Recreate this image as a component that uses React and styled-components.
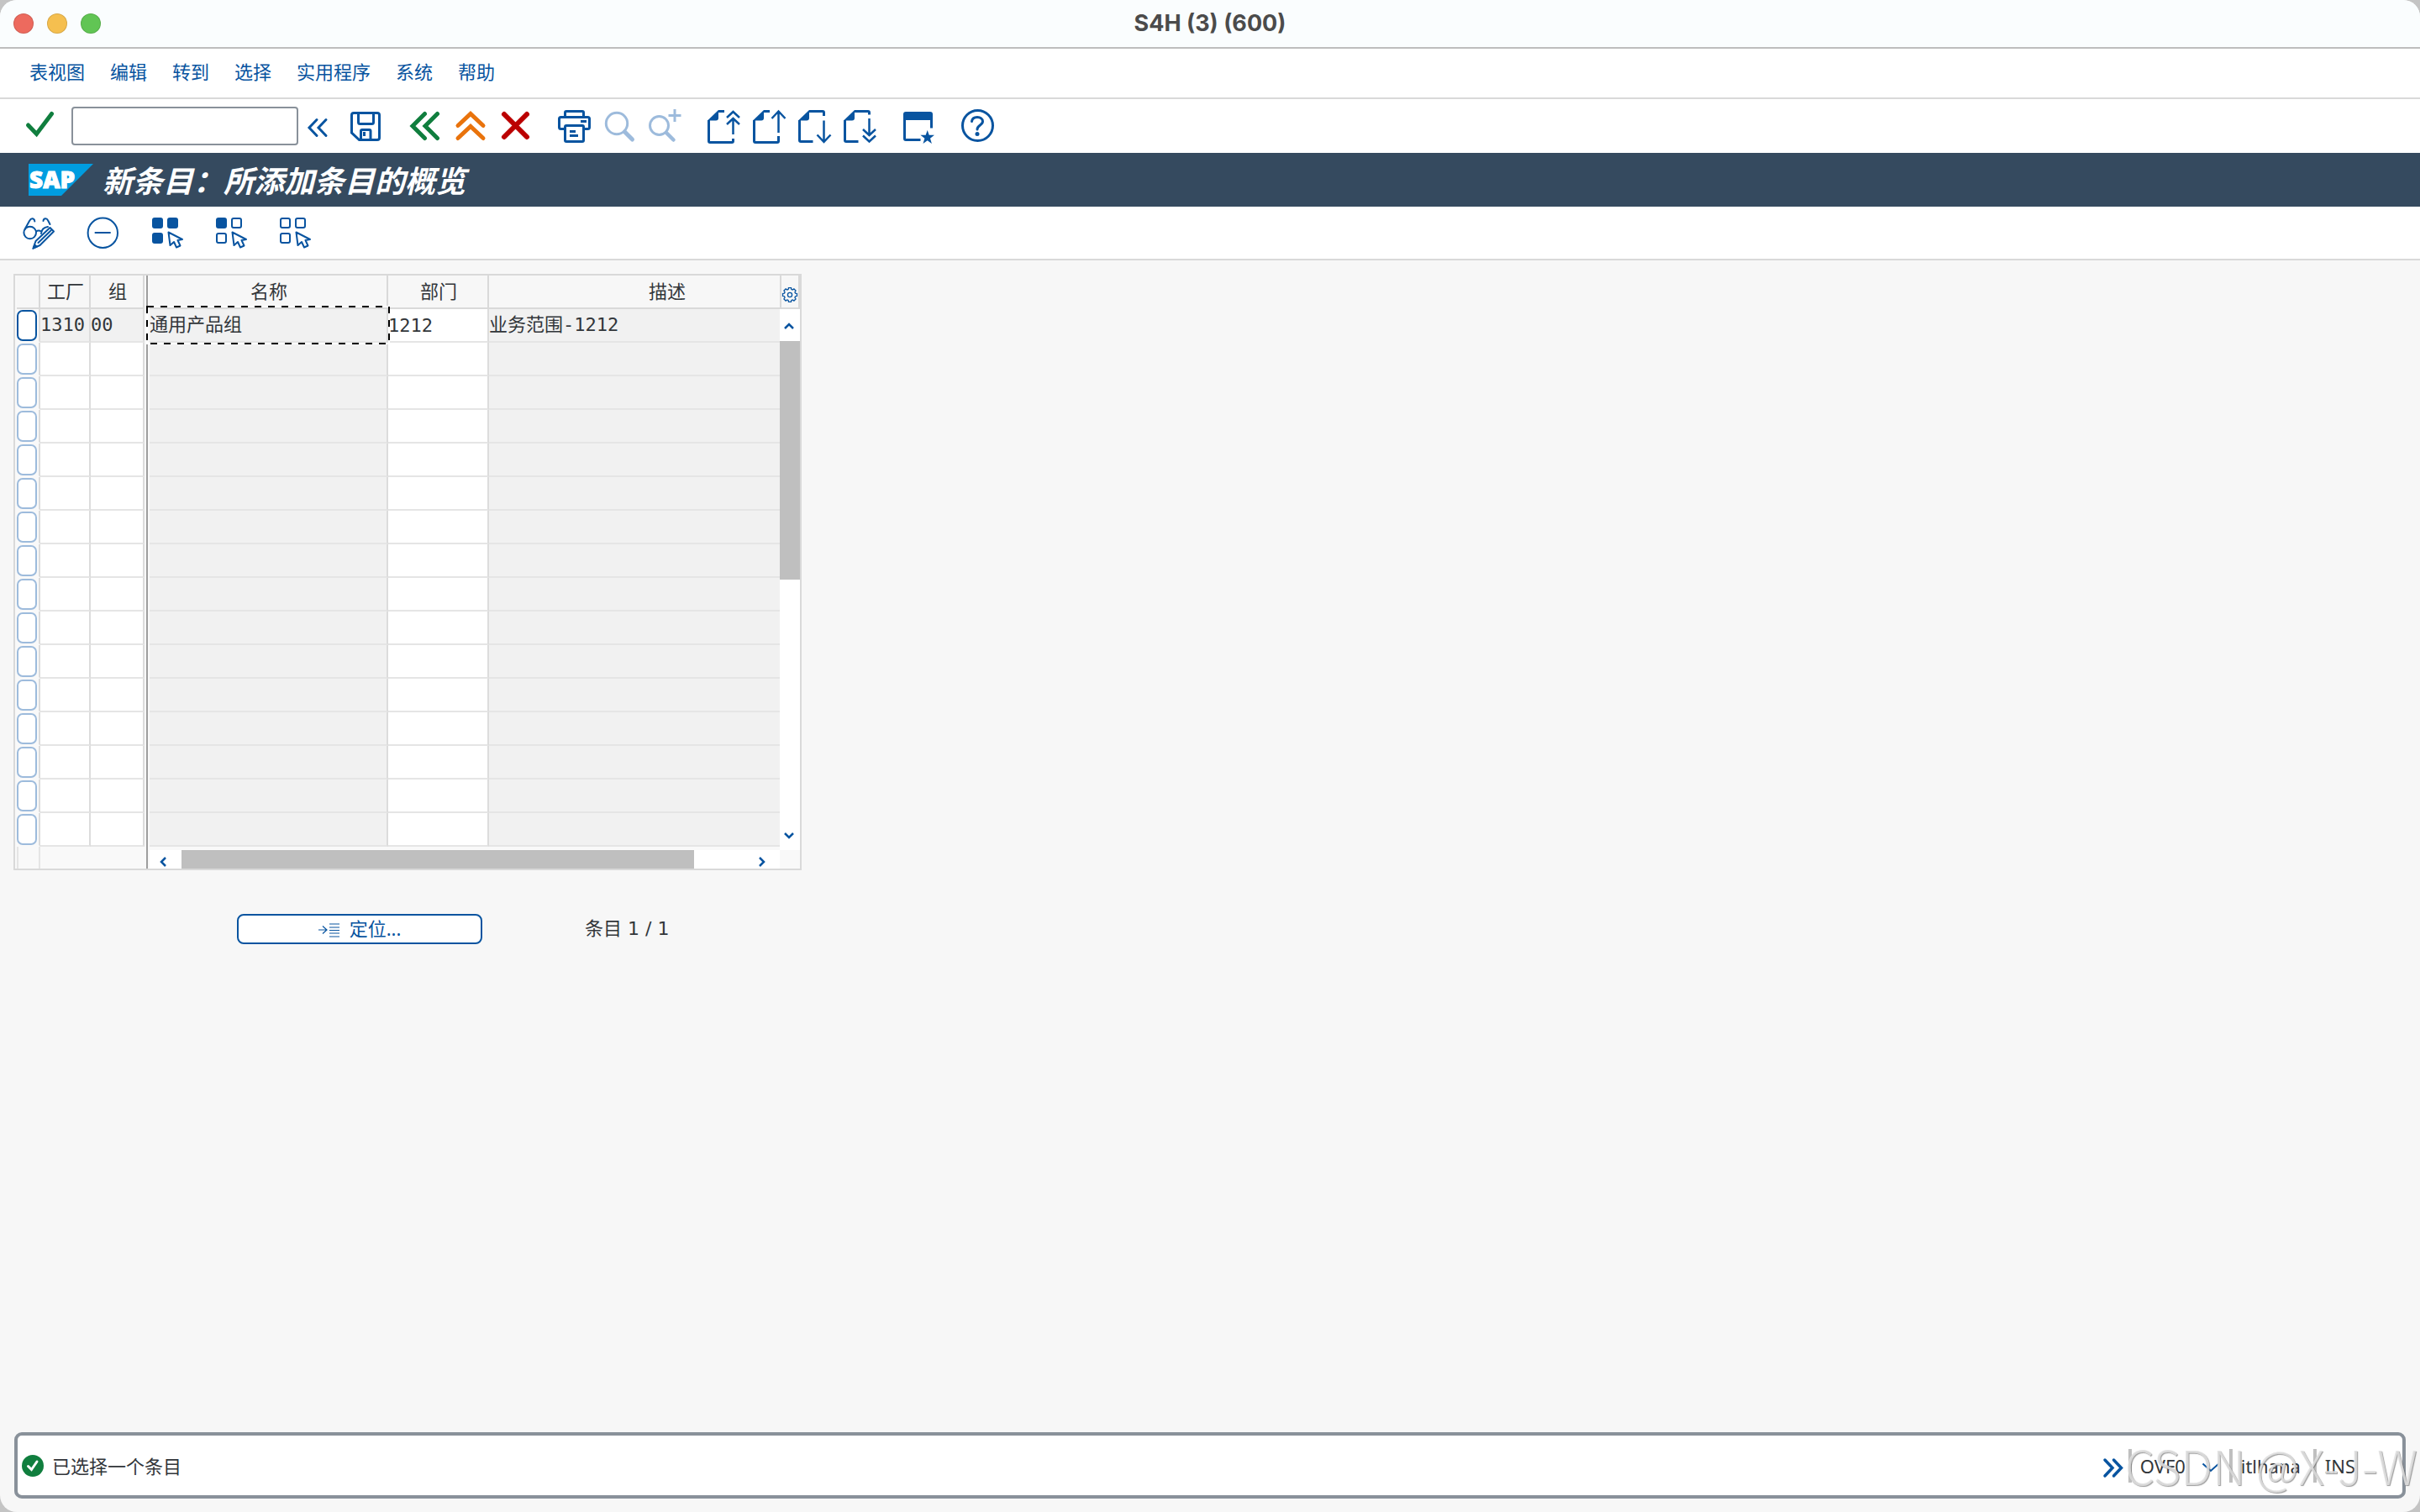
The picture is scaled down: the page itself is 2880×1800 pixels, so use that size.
import React from "react";
import styled, { createGlobalStyle, css } from "styled-components";

const GlobalStyle = createGlobalStyle`
  * {
    box-sizing: border-box;
  }
  body {
    margin: 0;
    background: #c4c4c4;
    color: #32363a;
    font-family: "Noto Sans", "Noto Sans CJK SC", sans-serif;
    font-size: 22px;
    line-height: 30px;
  }
  button, input {
    font: inherit;
    color: inherit;
  }
`;

const BLUE = "#0854a0";
const BLUE_SOFT = "#9dbbdc";
const MONO = `"DejaVu Sans Mono", "Noto Sans CJK SC", monospace`;

const Window = styled.div`
  display: flex;
  flex-direction: column;
  min-height: 100vh;
  border-radius: 20px;
  overflow: hidden;
  background: #f7f7f7;
`;
const TitleBar = styled.header`
  display: grid;
  grid-template-columns: 1fr auto 1fr;
  align-items: center;
  height: 58px;
  padding: 0 16px;
  background: #fafdfe;
  border-bottom: 2px solid #bdbdbd;
`;
const Lights = styled.div`
  display: flex;
  gap: 16px;
`;
const Light = styled.button`
  width: 24px;
  height: 24px;
  padding: 0;
  border: 1px solid rgba(0, 0, 0, 0.12);
  border-radius: 50%;
  background: ${(props) => props.$color};
`;
const WindowTitle = styled.h1`
  margin: 0;
  color: #4b4b4b;
  font-family: Inter, sans-serif;
  font-size: 27px;
  font-weight: 700;
  line-height: 32px;
`;
const MenuBar = styled.nav`
  display: flex;
  align-items: center;
  gap: 30px;
  height: 60px;
  padding: 0 35px 4px;
  background: #fff;
  border-bottom: 2px solid #d9d9d9;
`;
const MenuLink = styled.a`
  color: ${BLUE};
  text-decoration: none;
`;
const Toolbar = styled.div`
  display: flex;
  align-items: center;
  gap: 30px;
  height: 64px;
  padding: 0 31px;
  background: #fff;
`;
const ToolGroup = styled.div`
  display: flex;
  align-items: center;
  gap: 14px;
`;
const CommandField = styled.div`
  display: flex;
  align-items: center;
  gap: 8px;
`;
const CommandInput = styled.input`
  width: 270px;
  height: 46px;
  padding: 0 10px;
  border: 2px solid #89919a;
  border-radius: 4px;
  background: #fff;
`;
const IconButton = styled.button`
  display: flex;
  padding: 0;
  border: 0;
  background: none;
  color: ${(props) => props.$color || BLUE};
`;
const Svg = styled.svg`
  display: block;
  flex: none;
  overflow: visible;
  fill: none;
  stroke: currentColor;
`;
const TitleStrip = styled.div`
  display: flex;
  align-items: center;
  gap: 11px;
  height: 64px;
  padding: 0 34px;
  background: #354a5f;
`;
const LogoText = styled.text`
  fill: #fff;
  stroke: #fff;
  stroke-width: 1;
  font-family: "Open Sans", sans-serif;
  font-size: 28px;
  font-weight: 800;
`;
const ScreenTitle = styled.h2`
  margin: 0;
  padding-bottom: 2px;
  color: #fff;
  font-family: "Noto Sans CJK SC", sans-serif;
  font-size: 36px;
  font-style: italic;
  font-weight: 700;
  line-height: 48px;
`;
const AppToolbar = styled.div`
  display: flex;
  align-items: center;
  gap: 36px;
  height: 64px;
  padding: 0 27px;
  background: #fff;
  border-bottom: 2px solid #d9d9d9;
`;
const Main = styled.main`
  flex: 1;
  padding: 16px;
`;

const TablePanel = styled.section`
  display: grid;
  grid-template-columns: 154px 6px 750px 24px;
  grid-template-rows: auto 26px;
  width: max-content;
  border: 2px solid #d9d9d9;
  background: #f9f9f9;
`;
const Divider = styled.div`
  grid-row: 1 / -1;
  grid-column: 2;
  margin: 0 2px;
  background: #9e9e9e;
`;
const FrozenPane = styled.div`
  padding-left: 2px;
`;
const ScrollPane = styled.div`
  grid-column: 3;
  min-width: 0;
  /* the focus frame sticks out of the pane on the left */
  clip-path: inset(-4px 0 -4px -4px);
`;
const Table = styled.table`
  width: ${(props) => props.$width}px;
  table-layout: fixed;
  border-collapse: separate;
  border-spacing: 0;
  font-family: ${MONO};
  line-height: 26px;
`;
const Th = styled.th`
  width: ${(props) => props.$width}px;
  height: 40px;
  padding: 2px 0 0 2px;
  border-right: 2px solid #d9d9d9;
  border-bottom: 2px solid #d9d9d9;
  background: #f7f7f7;
  font-weight: 400;
  text-align: center;
`;
const Td = styled.td`
  height: 40px;
  padding: 0;
  border-right: 2px solid #dcdcdc;
  border-bottom: 2px solid #e5e5e5;
  background: ${(props) => (props.$readOnly ? "#f1f1f1" : "#fff")};
  white-space: nowrap;
`;
const NameTd = styled(Td)`
  position: relative;
`;
const SelectorTd = styled(Td)`
  background: #f9f9f9;
  border-bottom-color: #f9f9f9;
`;
const CellInput = styled.input`
  display: block;
  width: 100%;
  height: 36px;
  padding: 0;
  border: 0;
  outline: 0;
  background: transparent;
`;
const RowSelector = styled.button`
  display: block;
  width: 24px;
  height: 37px;
  padding: 0;
  border: 2px solid ${(props) => (props.$active ? BLUE : BLUE_SOFT)};
  border-radius: 7px;
  background: #fff;
`;
const FocusFrame = styled.svg`
  position: absolute;
  z-index: 1;
  top: -4px;
  left: -4px;
  width: 290px;
  height: 46px;
  fill: none;
  stroke-width: 2;
  pointer-events: none;
`;
const FrozenFoot = styled.div`
  width: 28px;
  margin-left: 2px;
  border: solid #e5e5e5;
  border-width: 0 2px;
`;
const scrollButton = css`
  display: flex;
  flex: none;
  align-items: center;
  justify-content: center;
  padding: 0;
  border: 0;
  background: #fff;
  color: ${BLUE};
`;
const VScroll = styled.div`
  grid-column: 4;
  display: flex;
  flex-direction: column;
  margin-bottom: -4px;
  background: #fff;
`;
const SettingsButton = styled.button`
  ${scrollButton}
  height: 40px;
  padding-top: 8px;
  border: solid #d9d9d9;
  border-width: 0 2px 2px;
  background: #f7f7f7;
`;
const VArrow = styled.button`
  ${scrollButton}
  height: 38px;
  padding: 2px 2px 0 0;
`;
const VTrack = styled.div`
  flex: 1;
`;
const VThumb = styled.div`
  height: 284px;
  background: #bfbfbf;
`;
const HScroll = styled.div`
  grid-row: 2;
  grid-column: 3;
  display: flex;
  height: 22px;
  margin-top: 4px;
  background: #fff;
`;
const HArrow = styled.button`
  ${scrollButton}
  width: 38px;
  padding: 6px 6px 0 0;
`;
const HTrack = styled.div`
  flex: 1;
`;
const HThumb = styled.div`
  width: 610px;
  height: 100%;
  background: #bfbfbf;
`;

const Actions = styled.div`
  display: flex;
  align-items: center;
  gap: 122px;
  padding: 52px 0 0 266px;
`;
const PositionButton = styled.button`
  display: flex;
  align-items: center;
  justify-content: center;
  gap: 12px;
  width: 292px;
  height: 36px;
  padding: 0 0 2px;
  border: 2px solid ${BLUE};
  border-radius: 8px;
  background: #fff;
  color: ${BLUE};
  line-height: 30px;
`;
const EntryCount = styled.span`
  font-family: "DejaVu Sans", "Noto Sans CJK SC", sans-serif;
`;

const StatusBar = styled.footer`
  position: relative;
  display: flex;
  align-items: center;
  justify-content: space-between;
  height: 79px;
  margin: 0 17px 16px;
  padding: 0 56px 0 5px;
  border: 4px solid #89919a;
  border-radius: 9px;
  background: #fff;
`;
const StatusMessage = styled.div`
  display: flex;
  align-items: center;
  gap: 10px;
`;
const StatusInfo = styled.div`
  display: flex;
  align-items: center;
`;
const ExpandButton = styled(IconButton)`
  margin-right: 6px;
`;
const InfoField = styled.div`
  display: flex;
  align-items: center;
  gap: 20px;
  min-width: ${(props) => props.$width}px;
  height: 40px;
  padding-left: 10px;
  border-left: 4px solid #bfbfbf;
`;
const Watermark = styled.span`
  position: absolute;
  right: -18px;
  bottom: 6px;
  color: rgba(226, 226, 226, 0.85);
  font-family: "Noto Sans CJK SC", sans-serif;
  font-size: 56px;
  font-weight: 300;
  line-height: 60px;
  text-shadow: 1px 1px 1px rgba(90, 90, 90, 0.6);
  white-space: nowrap;
  pointer-events: none;
`;

const FOLD = <path d="M-1 13.500L12 1v9.500q0 3-3 3z" fill="currentColor" stroke="none" />;
const CURSOR = (
  <path
    d="M21.500 19.500l2 15.500 4.500-4 3 6.500 4.500-2-3-6.500 5.500-1z"
    strokeWidth="2"
    strokeLinejoin="round"
  />
);

const icons = {
  check: <path d="M2.500 19L12.500 29.500L30.500 5.500" strokeWidth="5" strokeLinecap="round" />,
  collapse: <path d="M14 12.500L5 22L14 31.500M25 12.500L16 22L25 31.500" strokeWidth="3" strokeLinecap="round" />,
  save: (
    <g strokeWidth="3">
      <path d="M4 4.500h28q2.500 0 2.500 2.500v27q0 2.500-2.500 2.500H10.500L1.500 28V7q0-2.500 2.500-2.500z" />
      <path d="M9.500 5v10.500q0 2 2 2h14q2 0 2-2V5M12.500 36V26q0-1.500 1.500-1.500h8.500q1.500 0 1.500 1.500v10" />
      <path d="M16.500 27v5" />
    </g>
  ),
  back: <path d="M18.500 5.500L4 20L18.500 34.500M33.500 5.500L19 20L33.500 34.500" strokeWidth="5" strokeLinecap="round" />,
  up: <path d="M4 19.500L19 5.500L34 19.500M4 34.500L19 20.500L34 34.500" strokeWidth="5" strokeLinecap="round" />,
  cancel: <path d="M5 6L32 33M32 6L5 33" strokeWidth="6" strokeLinecap="round" />,
  print: (
    <g strokeWidth="3">
      <path d="M7.500 9V4q0-1.500 1.500-1.500h19q1.500 0 1.500 1.500v5" />
      <path d="M7.500 23.500H2.500q-2 0-2-2v-10q0-2 2-2h32q2 0 2 2v10q0 2-2 2h-5" />
      <rect x="7.500" y="19.500" width="22" height="19" rx="1.500" />
      <path d="M13 26.500h7M13 31.500h10M26 14.500h7" />
    </g>
  ),
  find: (
    <g>
      <circle cx="15" cy="17" r="12.700" strokeWidth="3" />
      <path d="M24.500 27L33.500 36" strokeWidth="5" strokeLinecap="round" />
    </g>
  ),
  findNext: (
    <g>
      <circle cx="11.500" cy="19.500" r="11" strokeWidth="3" />
      <path d="M20 28L28.500 36.500" strokeWidth="4.500" strokeLinecap="round" />
      <path d="M22.500 7.500h15M30 0v15" strokeWidth="3" />
    </g>
  ),
  firstPage: (
    <g strokeWidth="3">
      {FOLD}
      <path d="M19 2.500H12M.5 13v25q0 1.500 1.500 1.500h26q1.500 0 1.500-1.500v-3" />
      <path d="M22 10L29.500 3L37 10M22 18L29.500 11L37 18M29.500 11v19" strokeWidth="2.500" />
    </g>
  ),
  prevPage: (
    <g strokeWidth="3">
      {FOLD}
      <path d="M19 2.500H12M.5 13v25q0 1.500 1.500 1.500h26q1.500 0 1.500-1.500v-6" />
      <path d="M21.500 11L29.500 2.500L37.500 11M29.500 3v25" strokeWidth="2.500" />
    </g>
  ),
  nextPage: (
    <g strokeWidth="3">
      {FOLD}
      <path d="M12 2.500h16q1.500 0 1.500 1.500v4M.5 13v24q0 1.500 1.500 1.500h14.500" />
      <path d="M21.500 30.500L29.500 39L37.500 30.500M29.500 13.500V38" strokeWidth="2.500" />
    </g>
  ),
  lastPage: (
    <g strokeWidth="3">
      {FOLD}
      <path d="M12 2.500h16q1.500 0 1.500 1.500v2.500M.5 13v24q0 1.500 1.500 1.500h14.500" />
      <path d="M22 24L29.500 31L37 24M22 31.500L29.500 38.500L37 31.500M29.500 11v19" strokeWidth="2.500" />
    </g>
  ),
  favorite: (
    <g strokeWidth="3">
      <path d="M33.500 22.500V6q0-1.500-1.500-1.500H3q-1.500 0-1.500 1.500v29q0 1.500 1.500 1.500h17.500" />
      <path d="M1 5h33v8H1z" fill="currentColor" stroke="none" />
      <path
        d="M28.700 25l2 5.800h6.300l-5 3.900 1.900 6.200-5.200-3.700-5.200 3.700 1.900-6.200-5-3.900h6.300z"
        fill="currentColor"
        stroke="none"
      />
    </g>
  ),
  help: (
    <g strokeWidth="3">
      <circle cx="18.500" cy="19.500" r="18" />
      <path d="M11.500 14.500c.5-3.500 3.200-5 6.500-5 3.800 0 6.500 2 6.500 5 0 4.500-6.500 4.500-6.500 9.500" strokeLinecap="round" />
      <circle cx="18" cy="29.500" r="2.500" fill="currentColor" stroke="none" />
    </g>
  ),
  display: (
    <g strokeWidth="2" strokeLinejoin="round" strokeLinecap="round">
      <circle cx="8.700" cy="20" r="7.300" />
      <path d="M2.500 16L8 6q2-3.500 4.500-2.500 1.800 .8 1.800 3" />
      <path d="M16 18.500q3-2 6 0M22 21q.5-7 8-8" />
      <path d="M24.500 6q.3-2.500 2.500-2.700 2-.2 3 2L32.500 10" />
      <path d="M12.500 38.500l3-8.500L32.500 14l4.500 4.500L20.500 35zM18.500 32L33.500 17.500" />
      <path d="M12 39l2-5.500 3.500 3z" fill="currentColor" strokeWidth="1" />
    </g>
  ),
  remove: (
    <g strokeWidth="2">
      <circle cx="19.300" cy="20.300" r="17.700" />
      <path d="M9.700 20h19" />
    </g>
  ),
};

function SelectIcon({ filled }) {
  const squares = [
    [2, 2],
    [20, 2],
    [2, 20],
  ];
  return (
    <g strokeWidth="2">
      {squares.map(([x, y], i) => (
        <rect
          key={i}
          x={x + 1}
          y={y + 1}
          width="11"
          height="11"
          rx="2"
          fill={i < filled ? "currentColor" : "none"}
        />
      ))}
      {CURSOR}
    </g>
  );
}

function gearPath(c, inner, outer) {
  let d = "";
  for (let i = 0; i < 8; i++) {
    [
      [-0.28, inner],
      [-0.18, outer],
      [0.18, outer],
      [0.28, inner],
    ].forEach(([off, r]) => {
      const a = (i * Math.PI) / 4 + off;
      d += `${d ? "L" : "M"}${c + r * Math.cos(a)} ${c + r * Math.sin(a)}`;
    });
  }
  return d + "z";
}

function Tool({ label, icon, color, width = 40, children }) {
  return (
    <IconButton type="button" aria-label={label} $color={color}>
      <Svg width={width} height="40" viewBox={`0 0 ${width} 40`}>
        {children || icons[icon]}
      </Svg>
    </IconButton>
  );
}

const ARROWS = {
  up: "M1 7L6 2L11 7",
  down: "M1 2L6 7L11 2",
  left: "M7 1L2 6L7 11",
  right: "M2 1L7 6L2 11",
};

function Arrow({ dir }) {
  const vertical = dir === "up" || dir === "down";
  const w = vertical ? 12 : 9;
  const h = vertical ? 9 : 12;
  return (
    <Svg width={w} height={h} viewBox={`0 0 ${w} ${h}`} strokeWidth="2.500">
      <path d={ARROWS[dir]} />
    </Svg>
  );
}

const menus = ["表视图", "编辑", "转到", "选择", "实用程序", "系统", "帮助"];

const rows = Array.from({ length: 16 }, () => ({}));
rows[0] = { plant: "1310", group: "00", name: "通用产品组", dept: "1212", desc: "业务范围-1212" };

function EntryTable() {
  return (
    <TablePanel>
      <FrozenPane>
        <Table $width={152}>
          <thead>
            <tr>
              <Th $width={28} />
              <Th $width={60}>工厂</Th>
              <Th $width={64}>组</Th>
            </tr>
          </thead>
          <tbody>
            {rows.map((row, i) => (
              <tr key={i}>
                <SelectorTd>
                  <RowSelector type="button" aria-label={`行 ${i + 1}`} $active={i === 0} />
                </SelectorTd>
                <Td $readOnly={i === 0}>
                  {row.plant || <CellInput aria-label={`工厂 ${i + 1}`} />}
                </Td>
                <Td $readOnly={i === 0}>
                  {row.group || <CellInput aria-label={`组 ${i + 1}`} />}
                </Td>
              </tr>
            ))}
          </tbody>
        </Table>
      </FrozenPane>
      <Divider />
      <ScrollPane>
        <Table $width={828}>
          <thead>
            <tr>
              <Th $width={284}>名称</Th>
              <Th $width={120}>部门</Th>
              <Th $width={424}>描述</Th>
            </tr>
          </thead>
          <tbody>
            {rows.map((row, i) =>  (
              <tr key={i}>
                {row.name ? (
                  <NameTd $readOnly>
                    {row.name}
                    <FocusFrame viewBox="0 0 290 46">
                      <rect x="1" y="1" width="288" height="44" stroke="#fff" />
                      <rect x="1" y="1" width="288" height="44" stroke="#000" strokeDasharray="8 8" />
                    </FocusFrame>
                  </NameTd>
                ) : (
                  <Td $readOnly />
                )}
                <Td>
                  <CellInput aria-label={`部门 ${i + 1}`} defaultValue={row.dept} />
                </Td>
                <Td $readOnly>{row.desc}</Td>
              </tr>
            ))}
          </tbody>
        </Table>
      </ScrollPane>
      <VScroll>
        <SettingsButton type="button" aria-label="表设置">
          <Svg width="18" height="18" viewBox="0 0 18 18" strokeWidth="1.300">
            <path d={gearPath(9, 6.8, 8.6)} />
            <circle cx="9" cy="9" r="2.600" />
          </Svg>
        </SettingsButton>
        <VArrow type="button" aria-label="向上">
          <Arrow dir="up" />
        </VArrow>
        <VTrack>
          <VThumb />
        </VTrack>
        <VArrow type="button" aria-label="向下">
          <Arrow dir="down" />
        </VArrow>
      </VScroll>
      <FrozenFoot />
      <HScroll>
        <HArrow type="button" aria-label="向左">
          <Arrow dir="left" />
        </HArrow>
        <HTrack>
          <HThumb />
        </HTrack>
        <HArrow type="button" aria-label="向右">
          <Arrow dir="right" />
        </HArrow>
      </HScroll>
    </TablePanel>
  );
}

function App() {
  return (
    <Window>
      <GlobalStyle />
      <TitleBar>
        <Lights>
          <Light type="button" aria-label="关闭" $color="#ed6a5e" />
          <Light type="button" aria-label="最小化" $color="#f5bf4f" />
          <Light type="button" aria-label="缩放" $color="#61c554" />
        </Lights>
        <WindowTitle>S4H (3) (600)</WindowTitle>
      </TitleBar>

      <MenuBar>
        {menus.map((menu) => (
          <MenuLink key={menu} href="#">
            {menu}
          </MenuLink>
        ))}
      </MenuBar>

      <Toolbar>
        <ToolGroup>
          <Tool label="回车" icon="check" color="#107e3e" />
          <CommandField>
            <CommandInput type="text" aria-label="命令" />
            <Tool label="收起" icon="collapse" width={24} />
          </CommandField>
        </ToolGroup>
        <Tool label="保存" icon="save" />
        <ToolGroup>
          <Tool label="返回" icon="back" color="#107e3e" />
          <Tool label="退出" icon="up" color="#e9730c" />
          <Tool label="取消" icon="cancel" color="#bb0000" />
        </ToolGroup>
        <ToolGroup>
          <Tool label="打印" icon="print" />
          <Tool label="查找" icon="find" color={BLUE_SOFT} />
          <Tool label="查找下一个" icon="findNext" color={BLUE_SOFT} />
        </ToolGroup>
        <ToolGroup>
          <Tool label="第一页" icon="firstPage" />
          <Tool label="上一页" icon="prevPage" />
          <Tool label="下一页" icon="nextPage" />
          <Tool label="最后一页" icon="lastPage" />
        </ToolGroup>
        <Tool label="收藏" icon="favorite" />
        <Tool label="帮助" icon="help" />
      </Toolbar>

      <TitleStrip>
        <Svg width="77" height="38" viewBox="0 0 77 38">
          <path d="M0 0H77L39 38H0z" fill="#009de0" stroke="none" />
          <LogoText x="1" y="29">
            SAP
          </LogoText>
        </Svg>
        <ScreenTitle>新条目：所添加条目的概览</ScreenTitle>
      </TitleStrip>

      <AppToolbar>
        <Tool label="显示/更改" icon="display" />
        <Tool label="删除" icon="remove" />
        <Tool label="全选">
          <SelectIcon filled={3} />
        </Tool>
        <Tool label="选择块">
          <SelectIcon filled={1} />
        </Tool>
        <Tool label="取消全选">
          <SelectIcon filled={0} />
        </Tool>
      </AppToolbar>

      <Main>
        <EntryTable />
        <Actions>
          <PositionButton type="button">
            <Svg width="25" height="20" viewBox="0 0 25 20" strokeWidth="1.200">
              <path d="M0 12h10M5 7.500L10 12L5 16.500" />
              <path d="M13 5h12M13 9h12M13 12.500h12M13 16h12M13 20h12" />
            </Svg>
            定位...
          </PositionButton>
          <EntryCount>条目 1 / 1</EntryCount>
        </Actions>
      </Main>

      <StatusBar>
        <StatusMessage>
          <Svg width="26" height="26" viewBox="0 0 26 26">
            <circle cx="13" cy="13" r="13" fill="#107e3e" stroke="none" />
            <path d="M7.500 13.500L11.500 17.500L18 8" stroke="#fff" strokeWidth="3" strokeLinecap="round" />
          </Svg>
          已选择一个条目
        </StatusMessage>
        <StatusInfo>
          <ExpandButton type="button" aria-label="展开">
            <Svg width="24" height="24" viewBox="0 0 24 24" strokeWidth="3.500" strokeLinecap="round">
              <path d="M2 5L11 14.500L2 24M12.500 5L21.500 14.500L12.500 24" />
            </Svg>
          </ExpandButton>
          <InfoField $width={120}>
            OVF0
            <IconButton type="button" aria-label="系统信息">
              <Svg width="20" height="10" viewBox="0 0 20 10" strokeWidth="2">
                <path d="M.5 2.500L10 11L19.500 2.500" />
              </Svg>
            </IconButton>
          </InfoField>
          <InfoField $width={100}>itlhana</InfoField>
          <InfoField>INS</InfoField>
        </StatusInfo>
        <Watermark>CSDN @X-J-W</Watermark>
      </StatusBar>
    </Window>
  );
}

export default App;
